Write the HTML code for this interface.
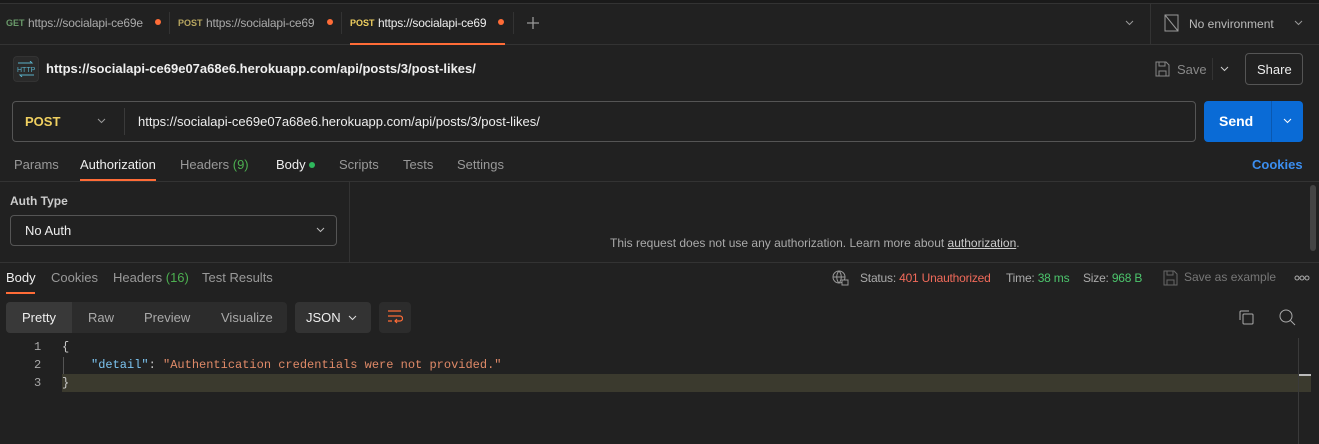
<!DOCTYPE html>
<html><head><style>
*{margin:0;padding:0;box-sizing:border-box}
body{width:1319px;height:444px;background:#212121;font-family:"Liberation Sans",sans-serif;color:#ccc;position:relative;overflow:hidden;font-size:13px}
.a{position:absolute;white-space:nowrap}
.b{font-weight:bold}
</style></head><body>
<div class="a" style="left:0;top:0;width:1319px;height:4px;background:#1a1a1a;border-bottom:1px solid #333"></div>
<div class="a" style="left:0;top:44px;width:1319px;height:1px;background:#333"></div>
<!-- tabs -->
<div class="a" style="left:6px;top:18px;font-size:9px;color:#6a9a6a" ><b>GET</b></div>
<div class="a" style="left:28px;top:16px;font-size:12px;color:#aaa;letter-spacing:-0.2px">https://socialapi-ce69e</div>
<div class="a" style="left:155px;top:19px;width:6px;height:6px;border-radius:50%;background:#ff6c37"></div>
<div class="a" style="left:169px;top:12px;width:1px;height:22px;background:#333"></div>
<div class="a" style="left:178px;top:18px;font-size:9px;color:#b8a660"><b>POST</b></div>
<div class="a" style="left:206px;top:16px;font-size:12px;color:#aaa;letter-spacing:-0.2px">https://socialapi-ce69</div>
<div class="a" style="left:327px;top:19px;width:6px;height:6px;border-radius:50%;background:#ff6c37"></div>
<div class="a" style="left:341px;top:12px;width:1px;height:22px;background:#333"></div>
<div class="a" style="left:350px;top:18px;font-size:9px;color:#f0d060"><b>POST</b></div>
<div class="a" style="left:378px;top:16px;font-size:12px;color:#eee;letter-spacing:-0.2px">https://socialapi-ce69</div>
<div class="a" style="left:498px;top:19px;width:6px;height:6px;border-radius:50%;background:#ff6c37"></div>
<div class="a" style="left:350px;top:43px;width:155px;height:2px;background:#ff6c37"></div>
<div class="a" style="left:513px;top:12px;width:1px;height:22px;background:#333"></div>
<svg class="a" style="left:527px;top:17px" width="12" height="12" viewBox="0 0 12 12"><path d="M6 0v12M0 6h12" stroke="#999" stroke-width="1.3"/></svg>
<svg class="a" style="left:1125px;top:20px" width="9" height="6" viewBox="0 0 9 6"><path d="M1 1l3.5 3.5L8 1" fill="none" stroke="#999"/></svg>
<div class="a" style="left:1150px;top:4px;width:1px;height:40px;background:#333"></div>
<svg class="a" style="left:1164px;top:14px" width="16" height="18" viewBox="0 0 16 18"><rect x="1" y="1" width="13" height="16" fill="none" stroke="#999"/><line x1="1" y1="1" x2="14" y2="17" stroke="#999"/></svg>
<div class="a" style="left:1189px;top:17px;font-size:12px;color:#bbb">No environment</div>
<svg class="a" style="left:1294px;top:20px" width="9" height="6" viewBox="0 0 9 6"><path d="M1 1l3.5 3.5L8 1" fill="none" stroke="#999"/></svg>
<!-- url header -->
<div class="a" style="left:13px;top:56px;width:26px;height:26px;border-radius:4px;background:#2a2a2a;border:1px solid #333"></div>
<svg class="a" style="left:16px;top:61px" width="20" height="16" viewBox="0 0 20 16"><path d="M2 2h14l-2-2M18 14H4l2 2" fill="none" stroke="#5ab0c8"/><text x="1" y="11" font-size="7" fill="#5ab0c8" font-family="Liberation Sans">HTTP</text></svg>
<div class="a b" style="left:46px;top:61px;font-size:13px;color:#eee">https://socialapi-ce69e07a68e6.herokuapp.com/api/posts/3/post-likes/</div>
<svg class="a" style="left:1155px;top:61px" width="15" height="16" viewBox="0 0 15 16"><path d="M1 1h10l3 3v11H1z M4 1v4h6V1 M4 15v-5h7v5" fill="none" stroke="#888"/></svg>
<div class="a" style="left:1177px;top:62px;font-size:13px;color:#888">Save</div>
<div class="a" style="left:1212px;top:58px;width:1px;height:22px;background:#333"></div>
<svg class="a" style="left:1220px;top:66px" width="9" height="6" viewBox="0 0 9 6"><path d="M1 1l3.5 3.5L8 1" fill="none" stroke="#ccc"/></svg>
<div class="a" style="left:1245px;top:53px;width:58px;height:32px;border:1px solid #555;border-radius:4px"></div>
<div class="a" style="left:1257px;top:62px;font-size:13px;color:#eee">Share</div>
<!-- request bar -->
<div class="a" style="left:12px;top:101px;width:1184px;height:41px;border:1px solid #555;border-radius:4px"></div>
<div class="a b" style="left:25px;top:114px;font-size:13px;color:#f0d060">POST</div>
<svg class="a" style="left:97px;top:118px" width="9" height="6" viewBox="0 0 9 6"><path d="M1 1l3.5 3.5L8 1" fill="none" stroke="#999"/></svg>
<div class="a" style="left:124px;top:108px;width:1px;height:27px;background:#3a3a3a"></div>
<div class="a" style="left:138px;top:114px;font-size:13px;color:#eee">https://socialapi-ce69e07a68e6.herokuapp.com/api/posts/3/post-likes/</div>
<div class="a" style="left:1204px;top:101px;width:99px;height:41px;background:#0a6bd6;border-radius:4px"></div>
<div class="a" style="left:1271px;top:101px;width:1px;height:41px;background:#0a58b0"></div>
<div class="a b" style="left:1219px;top:113px;font-size:14px;color:#fff">Send</div>
<svg class="a" style="left:1283px;top:118px" width="9" height="6" viewBox="0 0 9 6"><path d="M1 1l3.5 3.5L8 1" fill="none" stroke="#fff"/></svg>
<!-- req tabs -->
<div class="a" style="left:14px;top:157px;color:#999">Params</div>
<div class="a" style="left:80px;top:157px;color:#eee">Authorization</div>
<div class="a" style="left:80px;top:179px;width:76px;height:2px;background:#ff6c37"></div>
<div class="a" style="left:180px;top:157px;color:#999">Headers <span style="color:#4caf50">(9)</span></div>
<div class="a" style="left:276px;top:157px;color:#eee">Body</div>
<div class="a" style="left:309px;top:162px;width:6px;height:6px;border-radius:50%;background:#2eb85c"></div>
<div class="a" style="left:339px;top:157px;color:#999">Scripts</div>
<div class="a" style="left:403px;top:157px;color:#999">Tests</div>
<div class="a" style="left:457px;top:157px;color:#999">Settings</div>
<div class="a b" style="left:1252px;top:157px;color:#3b8ef0">Cookies</div>
<div class="a" style="left:0;top:181px;width:1319px;height:1px;background:#333"></div>
<!-- auth -->
<div class="a" style="left:349px;top:182px;width:1px;height:80px;background:#333"></div>
<div class="a b" style="left:10px;top:194px;font-size:12px;color:#ccc">Auth Type</div>
<div class="a" style="left:10px;top:215px;width:327px;height:31px;border:1px solid #555;border-radius:4px"></div>
<div class="a" style="left:25px;top:223px;color:#eee">No Auth</div>
<svg class="a" style="left:316px;top:227px" width="9" height="6" viewBox="0 0 9 6"><path d="M1 1l3.5 3.5L8 1" fill="none" stroke="#bbb"/></svg>
<div class="a" style="left:610px;top:236px;font-size:12px;color:#aaa">This request does not use any authorization. Learn more about <span style="text-decoration:underline;color:#ccc">authorization</span>.</div>
<div class="a" style="left:1310px;top:185px;width:6px;height:66px;background:#444;border-radius:3px"></div>
<div class="a" style="left:0;top:262px;width:1319px;height:1px;background:#333"></div>
<!-- response tabs -->
<div class="a" style="left:6px;top:270px;color:#eee">Body</div>
<div class="a" style="left:6px;top:292px;width:29px;height:2px;background:#ff6c37"></div>
<div class="a" style="left:51px;top:270px;color:#999">Cookies</div>
<div class="a" style="left:113px;top:270px;color:#999">Headers <span style="color:#4caf50">(16)</span></div>
<div class="a" style="left:202px;top:270px;color:#999">Test Results</div>
<svg class="a" style="left:832px;top:270px" width="17" height="16" viewBox="0 0 17 16"><circle cx="7" cy="7" r="6" fill="none" stroke="#999"/><path d="M1 7h12M7 1c-3 3-3 9 0 12M7 1c3 3 3 9 0 12" fill="none" stroke="#999"/><rect x="10" y="10" width="6" height="5" fill="#212121" stroke="#999"/></svg>
<div class="a" style="left:860px;top:271px;font-size:12px;color:#aaa;letter-spacing:-0.2px">Status: <span style="color:#f06a5a">401 Unauthorized</span></div>
<div class="a" style="left:1006px;top:271px;font-size:12px;color:#aaa;letter-spacing:-0.2px">Time: <span style="color:#4cc46c">38 ms</span></div>
<div class="a" style="left:1083px;top:271px;font-size:12px;color:#aaa;letter-spacing:-0.2px">Size: <span style="color:#4cc46c">968 B</span></div>
<svg class="a" style="left:1163px;top:270px" width="15" height="16" viewBox="0 0 15 16"><path d="M1 1h10l3 3v11H1z M4 1v4h6V1 M4 15v-5h7v5" fill="none" stroke="#666"/></svg>
<div class="a" style="left:1184px;top:270px;font-size:12px;color:#777">Save as example</div>
<svg class="a" style="left:1294px;top:275px" width="16" height="6" viewBox="0 0 16 6"><circle cx="3" cy="3" r="2" fill="none" stroke="#aaa"/><circle cx="8" cy="3" r="2" fill="none" stroke="#aaa"/><circle cx="13" cy="3" r="2" fill="none" stroke="#aaa"/></svg>
<!-- toolbar -->
<div class="a" style="left:6px;top:302px;width:281px;height:31px;background:#2c2c2c;border-radius:4px"></div>
<div class="a" style="left:6px;top:302px;width:66px;height:31px;background:#393939;border-radius:4px 0 0 4px"></div>
<div class="a" style="left:22px;top:310px;color:#eee">Pretty</div>
<div class="a" style="left:88px;top:310px;color:#aaa">Raw</div>
<div class="a" style="left:144px;top:310px;color:#aaa">Preview</div>
<div class="a" style="left:221px;top:310px;color:#aaa">Visualize</div>
<div class="a" style="left:295px;top:302px;width:76px;height:31px;background:#333;border-radius:4px"></div>
<div class="a" style="left:306px;top:310px;color:#eee">JSON</div>
<svg class="a" style="left:348px;top:315px" width="9" height="6" viewBox="0 0 9 6"><path d="M1 1l3.5 3.5L8 1" fill="none" stroke="#ddd"/></svg>
<div class="a" style="left:379px;top:302px;width:32px;height:31px;background:#2c2c2c;border-radius:4px"></div>
<svg class="a" style="left:387px;top:309px" width="16" height="16" viewBox="0 0 16 16"><path d="M1 2h13M1 7h12a2.5 2.5 0 0 1 0 5H8M10 10l-2 2 2 2M1 12h4" fill="none" stroke="#ff6c37" stroke-width="1.2"/></svg>
<svg class="a" style="left:1239px;top:310px" width="15" height="15" viewBox="0 0 15 15"><rect x="4" y="4" width="10" height="10" rx="1" fill="none" stroke="#aaa"/><path d="M1 10V2a1 1 0 0 1 1-1h8" fill="none" stroke="#aaa"/></svg>
<svg class="a" style="left:1279px;top:309px" width="17" height="17" viewBox="0 0 17 17"><circle cx="7" cy="7" r="6" fill="none" stroke="#aaa"/><line x1="11.5" y1="11.5" x2="16" y2="16" stroke="#aaa"/></svg>
<!-- code -->
<div class="a" style="left:62px;top:374px;width:1249px;height:18px;background:#3b3a2e"></div>
<div class="a" style="left:1298px;top:338px;width:1px;height:106px;background:#3a3a3a"></div>
<div class="a" style="left:1299px;top:374px;width:12px;height:2px;background:#bbb"></div>
<div class="a" style="left:63px;top:357px;width:1px;height:17px;background:#555"></div>
<div style="font-family:'Liberation Mono',monospace;font-size:12px">
<div class="a" style="left:34px;top:340px;color:#aaa">1</div>
<div class="a" style="left:34px;top:358px;color:#aaa">2</div>
<div class="a" style="left:34px;top:376px;color:#aaa">3</div>
<div class="a" style="left:62px;top:340px;color:#ccc">{</div>
<div class="a" style="left:91px;top:358px"><span style="color:#7cc4f0">"detail"</span><span style="color:#ccc">: </span><span style="color:#e08a68">"Authentication credentials were not provided."</span></div>
<div class="a" style="left:62px;top:376px;color:#ccc">}</div>
</div>
</body></html>
